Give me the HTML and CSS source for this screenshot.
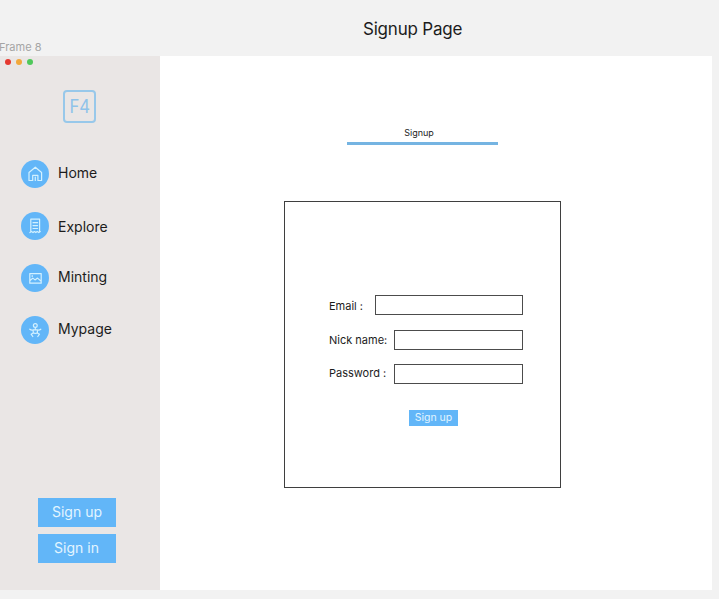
FILE: index.html
```html
<!DOCTYPE html>
<html lang="en">
<head>
<meta charset="utf-8">
<title>Signup Page</title>
<link rel="stylesheet" href="styles.css">
</head>
<body>
<header class="board-header">
  <h1 class="board-title">Signup Page</h1>
  <span class="frame-label">Frame 8</span>
</header>
<div class="frame">
  <aside class="sidebar">
    <div class="window-dots"><i class="dot red"></i><i class="dot amber"></i><i class="dot green"></i></div>
    <div class="logo"><span class="logo-text">F4</span></div>
    <nav class="nav">
      <a class="nav-item"><span class="nav-icon"><svg viewBox="0 0 28 28"><path d="M8 20.5V12.5L14.3 7.2l6.3 5.3v8h-3.7V15.4h-5.2v5.1zM14.3 17v3.5"/></svg></span><span class="nav-text home">Home</span></a>
      <a class="nav-item"><span class="nav-icon"><svg viewBox="0 0 28 28"><path d="M9.8 7.2h8.8v12.3M9.8 7.2v12.3M8.9 20.6l1.5-1 1.6 1 1.4-1 1.4 1 1.4-1 1.6 1 1.5-1M12 10.7h4.6M12 13.6h4.6M12 16.5h4.6"/></svg></span><span class="nav-text explore">Explore</span></a>
      <a class="nav-item"><span class="nav-icon"><svg viewBox="0 0 28 28"><path d="M8.8 9.6h11.4v9.6H8.8zM8.8 16.7l3-2.6 2.2 1.8 2.5-1.8 3.7 3.2M11.2 11.5v1"/></svg></span><span class="nav-text minting">Minting</span></a>
      <a class="nav-item"><span class="nav-icon"><svg viewBox="0 0 28 28"><circle cx="14.3" cy="9.5" r="1.9"/><path d="M8.8 13.2q1.5 1.3 4 .6h3q2.5.7 4-.6M12.2 13.8v3.1l-2.1 1.3 1.7 2.3M16.4 13.8v3.1l2.1 1.3-1.7 2.3M12.2 16.9l2.1.6 2.1-.6M14.3 11.5v2.3"/></svg></span><span class="nav-text mypage">Mypage</span></a>
    </nav>
    <div class="auth">
      <button class="auth-btn">Sign up</button>
      <button class="auth-btn signin">Sign in</button>
    </div>
  </aside>
  <main class="main">
    <div class="tab">Signup</div>
    <form class="card">
      <div class="field email"><label for="email">Email :</label><input id="email" type="text"></div>
      <div class="field nick"><label for="nick">Nick name:</label><input id="nick" type="text"></div>
      <div class="field pass"><label for="pass">Password :</label><input id="pass" type="password"></div>
      <button class="submit" type="button">Sign up</button>
    </form>
  </main>
</div>
</body>
</html>
```
FILE: styles.css
```css
* { box-sizing: border-box; }
body {
  margin: 0;
  height: 599px;
  overflow: hidden;
  background: #f2f2f2;
  color: #1c1c1c;
  font-family: Inter, "Liberation Sans", sans-serif;
}
button { border: 0; padding: 0; border-radius: 0; font-family: inherit; color: #e3f5ff; background: #62b6f8; }

.board-header { height: 56px; padding-top: 18px; }
.board-title { margin: 0 0 0 363px; font-size: 17px; line-height: 22px; font-weight: 400; letter-spacing: -0.2px; white-space: nowrap; }
.frame-label { display: block; margin-left: -1px; font-size: 11px; line-height: 14px; color: #a5a5a5; }

.frame { display: flex; width: 712px; height: 534px; background: #fff; }
.sidebar { display: flex; flex-direction: column; width: 160px; background: #eae6e5; }
.window-dots { display: flex; gap: 5px; padding: 3px 0 0 4.5px; }
.dot { width: 6px; height: 6px; border-radius: 50%; }
.red { background: #e5382f; }
.amber { background: #f2a83b; }
.green { background: #50c85a; }
.logo {
  display: flex; justify-content: center;
  width: 33px; height: 33px; margin: 25px 0 0 63px;
  border: 2px solid #98c8ea; border-radius: 4px;
  color: #8fc3ea; font-size: 19px; font-weight: 400; line-height: 29px;
}
.logo-text { transform: scaleX(0.88); }
.nav { display: flex; flex-direction: column; gap: 24px; margin: 37px 0 0 21px; }
.nav-item { display: flex; align-items: center; gap: 9px; height: 28px; }
.nav-icon { width: 28px; height: 28px; border-radius: 50%; background: #62b6f8; }
.nav-icon svg { display: block; width: 28px; height: 28px; fill: none; stroke: #d3f1ff; stroke-width: 1.2; stroke-linejoin: round; stroke-linecap: round; }
.nav-text { font-size: 14px; line-height: 20px; }
.home { margin-bottom: 2px; }
.explore { margin-top: 2px; }
.minting, .mypage { margin-bottom: 2px; }
.auth { display: flex; flex-direction: column; gap: 7px; margin: auto 0 27px 38px; }
.auth-btn { width: 78px; height: 29px; padding-bottom: 2px; font-size: 14px; }
.signin { padding-right: 1px; }

.main { flex: 1; padding: 69px 0 0 125px; }
.tab { width: 151px; height: 19.5px; margin-left: 62px; border-bottom: 3px solid #75b4e2; font-size: 9px; line-height: 15px; text-align: center; padding-right: 7px; }
.card { display: flex; flex-direction: column; width: 277px; height: 287px; margin: 56.5px 0 0 -1px; padding: 93px 37px 0 44px; border: 1px solid #3f3f3f; }
.field { display: flex; align-items: center; justify-content: space-between; height: 20px; font-size: 11px; line-height: 16px; white-space: nowrap; }
.field input { width: 129px; height: 20px; border: 1px solid #4c4c4c; border-radius: 0; background: #fff; padding: 2px 4px; }
.email input { width: 148px; }
.email label { padding-top: 1px; }
.nick { margin-top: 15.4px; }
.pass { margin-top: 13.6px; }
.pass label { padding-bottom: 2px; }
.submit { width: 49px; height: 16px; margin: 26px 0 0 80px; font-size: 10.5px; line-height: 16px; }
```
